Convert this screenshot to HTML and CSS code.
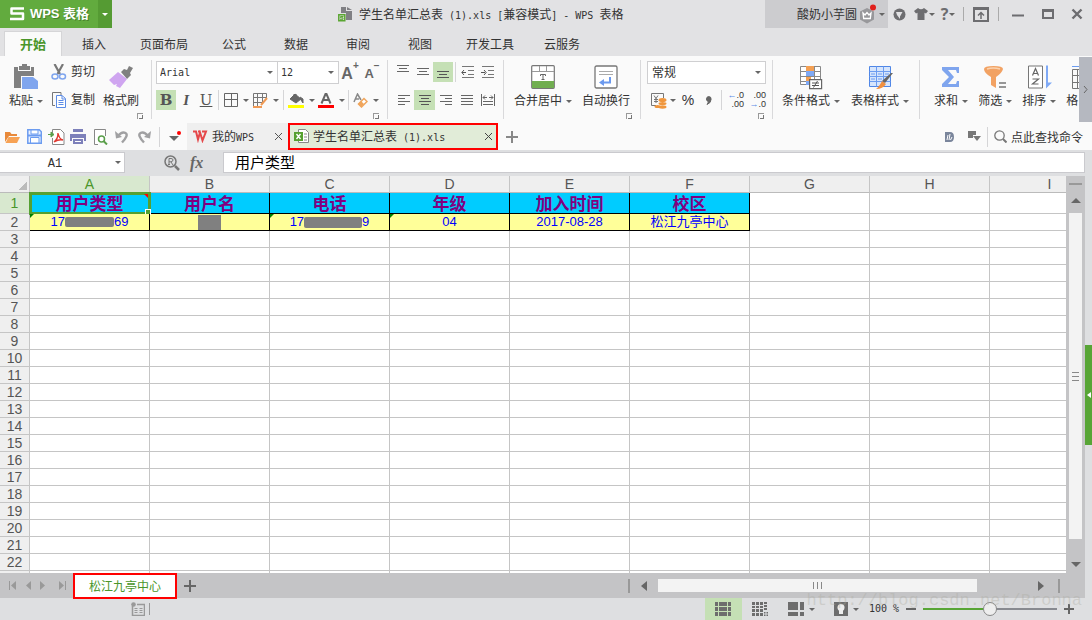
FILE: index.html
```
<!DOCTYPE html>
<html lang="zh-CN">
<head>
<meta charset="utf-8">
<title>学生名单汇总表 (1).xls - WPS 表格</title>
<link rel="stylesheet" href="styles.css">
</head>
<body>
<header class="titlebar">
  <button class="brand"><svg width="16" height="14" viewBox="0 0 16 14"><path d="M15 1.500H2.500V6.500H14V12H1" fill="none" stroke="#fff" stroke-width="2.500" stroke-linejoin="round"/></svg><span>WPS 表格</span></button>
  <button class="brand-menu" aria-label="菜单"><i class="arrow"></i></button>
  <div class="doc-title">
    <svg width="15" height="15" viewBox="0 0 15 15"><path d="M3 0h5v4h6v9H8V6H3z" fill="#808084"/><path d="M9 0l5 3H9z" fill="#808084"/><path d="M.8 7.800h6v6h-6z" fill="#e2e2e4" stroke="#5aa632" stroke-width="1.500"/><path d="M5.500 9.500H2.500v1.300h2.500v1.500H2" fill="none" stroke="#5aa632"/></svg>
    <span>学生名单汇总表<code> (1).xls [</code>兼容模式<code>] - WPS </code>表格</span>
  </div>
  <button class="account"><span>酸奶小芋圆</span><svg width="16" height="20" viewBox="0 0 16 20"><path d="M7 4l7 3.500v8L7 19.500l-7-4v-8z" fill="#98989b"/><path d="M3 9l2 2 2-2.500L9 11l2-2-.7 5.500H3.700z" fill="none" stroke="#fff" stroke-width="1.300"/><circle cx="13" cy="3.500" r="3" fill="#e0201c"/></svg><i class="arrow"></i></button>
  <div class="window-tools">
    <button class="skin" aria-label="皮肤"><svg width="13" height="13" viewBox="0 0 13 13"><circle cx="6.500" cy="6.500" r="6" fill="#6d6d70"/><path d="M3 4h6.500L7 8.500v2.500L4 7z" fill="#e2e2e4"/></svg></button>
    <button class="wide" aria-label="换装"><svg width="14" height="12" viewBox="0 0 14 12"><path d="M0 3l4-3q3 2.500 6 0l4 3-2 2.500-1.500-.8V12h-7V4.700L2 5.500z" fill="#6d6d70"/></svg><i class="arrow"></i></button>
    <button class="help" aria-label="帮助"><b>?</b><i class="arrow"></i></button>
    <i class="bar"></i>
    <button class="box" aria-label="隐藏功能区"><svg width="16" height="15" viewBox="0 0 16 15"><path d="M1 1h14v13H1zM1 2h14" fill="none" stroke="#6d6d70" stroke-width="2"/><path d="M8 12V6M5 8.500l3-3 3 3" fill="none" stroke="#6d6d70" stroke-width="1.500"/></svg></button>
    <i class="bar"></i>
    <button class="win" aria-label="最小化"><svg width="12" height="12" viewBox="0 0 12 12"><path d="M0 7.500h12" stroke="#6d6d70" stroke-width="2"/></svg></button>
    <button class="win" aria-label="最大化"><svg width="12" height="12" viewBox="0 0 12 12"><path d="M1 2h10v8H1z" fill="none" stroke="#6d6d70" stroke-width="2"/><path d="M0 2.500h12" stroke="#6d6d70" stroke-width="3"/></svg></button>
    <button class="win" aria-label="关闭"><svg width="12" height="12" viewBox="0 0 12 12"><path d="M1.500 1.500l9 9M10.500 1.500l-9 9" stroke="#6d6d70" stroke-width="2.400"/></svg></button>
  </div>
</header>

<nav class="tabs">
  <button class="active">开始</button><button>插入</button><button>页面布局</button><button>公式</button><button>数据</button><button>审阅</button><button>视图</button><button>开发工具</button><button>云服务</button>
</nav>

<section class="ribbon">
  <div class="groups">
    <div class="group clipboard">
      <button class="big"><svg width="26" height="26" viewBox="0 0 26 26"><path d="M1 3h4v4h13V3h3v9H8v12H1z" fill="#808080"/><path d="M6 2h3V0h5v2h3v4H6z" fill="#808080"/><path d="M9 13h11l5 4v8H9z" fill="#7fa5ee"/></svg><span>粘贴<i class="arrow"></i></span></button>
      <div class="stack">
        <button><svg width="16" height="16" viewBox="0 0 16 16"><path d="M3.500 0L9 10M12 0L6.500 10" stroke="#777" stroke-width="2.200"/><ellipse cx="4" cy="12.500" rx="3" ry="2.500" fill="none" stroke="#7fa5ee" stroke-width="1.500"/><ellipse cx="11.500" cy="12.500" rx="3" ry="2.500" fill="none" stroke="#7fa5ee" stroke-width="1.500"/></svg>剪切</button>
        <button><svg width="16" height="16" viewBox="0 0 16 16"><path d="M4 13.500H1.500V.5H10V3" fill="none" stroke="#777"/><path d="M5.500 3.500h5.500l3.500 3V15.500h-9z" fill="#fff" stroke="#5b8be6"/><path d="M7.500 8.500h5M7.500 10.500h5M7.500 12.500h5M11 4v3h3" fill="none" stroke="#5b8be6"/></svg>复制</button>
      </div>
      <button class="big"><svg width="24" height="24" viewBox="0 0 24 24"><path d="M12 7l3-3 3 1 2-4 4 2-3 5 1 2-4 4z" fill="#808080"/><path d="M9 7l9 7-7 9-4-2 1-2-3 1-5-5z" fill="#cfa5f0"/></svg><span>格式刷</span></button>
      <i class="launch"></i>
    </div>

    <div class="group font">
      <div class="line">
        <label class="combo face"><select aria-label="字体"><option>Arial</option></select><i class="arrow"></i></label>
        <label class="combo size"><select aria-label="字号"><option>12</option></select><i class="arrow"></i></label>
        <button class="grow" aria-label="增大字号"><b>A</b><sup>+</sup></button>
        <button class="grow small" aria-label="减小字号"><b>A</b><sup>−</sup></button>
      </div>
      <div class="line">
        <button class="tool on serif"><b>B</b></button><button class="tool serif"><em>I</em></button><button class="tool serif"><u>U</u></button><i class="sep"></i>
        <button class="split" aria-label="边框"><svg width="14" height="14" viewBox="0 0 14 14"><path d="M.5.5h13v13H.5zM7.500.5v13M.5 6.500h13" fill="none" stroke="#666"/></svg><i class="arrow"></i></button>
        <button class="split" aria-label="绘图边框"><svg width="15" height="15" viewBox="0 0 15 15"><path d="M8 13.500H.5V.5h13V5M.5 4.500h13M.5 9.500H9M4.500.5v13M9.500.5V9" fill="none" stroke="#777"/><path d="M14 5L8 12M0 14h9" stroke="#f09a55" stroke-width="2"/></svg><i class="arrow"></i></button><i class="sep"></i>
        <button class="split" aria-label="填充颜色"><svg width="16" height="15" viewBox="0 0 16 15"><path d="M2 6l5-5 6 5-5 4zM5 2h4M12 4l3 2v4l-2-3" fill="#666" stroke="#666"/><path d="M0 12h16v3H0z" fill="#ff0"/></svg><i class="arrow"></i></button>
        <button class="split" aria-label="字体颜色"><svg width="16" height="15" viewBox="0 0 16 15"><path d="M3.500 10.500L7.500 1h1l4 9.500M5 7h6" fill="none" stroke="#666" stroke-width="2"/><path d="M0 12h16v3H0z" fill="#f00"/></svg><i class="arrow"></i></button><i class="sep"></i>
        <button class="split" aria-label="清除格式"><svg width="15" height="15" viewBox="0 0 15 15"><path d="M1 9l3.500-8L8 7M2.500 6H6" fill="none" stroke="#888" stroke-width="1.500"/><path d="M5.500 11L11 5.500l3 3L8.500 14z" fill="#fff" stroke="#f0a55c" stroke-width="1.500"/><path d="M5 11l3-3 3 3-3 3z" fill="#f0a55c"/></svg><i class="arrow"></i></button>
      </div>
      <i class="launch"></i>
    </div>

    <div class="group align">
      <div class="line">
        <button class="tool" aria-label="顶端对齐"><svg width="14" height="14" viewBox="0 0 14 14"><path d="M1 .5h12M3 3.500h8M1 6.500h12" stroke="#666"/></svg></button><button class="tool" aria-label="垂直居中"><svg width="14" height="14" viewBox="0 0 14 14"><path d="M1 3.500h12M3 6.500h8M1 9.500h12" stroke="#666"/></svg></button><button class="tool on" aria-label="底端对齐"><svg width="14" height="14" viewBox="0 0 14 14"><path d="M1 6.500h12M3 9.500h8M1 12.500h12" stroke="#555"/></svg></button><i class="sep"></i><button class="tool" aria-label="减少缩进"><svg width="14" height="14" viewBox="0 0 14 14"><path d="M1 1.500h12M7 5.500h6M7 9.500h6M1 12.500h12" stroke="#777"/><path d="M5 7.500H1M3 5L.8 7.500 3 10" fill="none" stroke="#555"/></svg></button><button class="tool" aria-label="增加缩进"><svg width="14" height="14" viewBox="0 0 14 14"><path d="M1 1.500h12M7 5.500h6M7 9.500h6M1 12.500h12" stroke="#777"/><path d="M0 7.500h4M3 5l2.200 2.500L3 10" fill="none" stroke="#555"/></svg></button>
      </div>
      <div class="line">
        <button class="tool" aria-label="左对齐"><svg width="14" height="14" viewBox="0 0 14 14"><path d="M1 2.500h12M1 5.500h7M1 8.500h12M1 11.500h7" stroke="#666"/></svg></button><button class="tool on" aria-label="居中"><svg width="14" height="14" viewBox="0 0 14 14"><path d="M1 2.500h12M3 5.500h8M1 8.500h12M3 11.500h8" stroke="#555"/></svg></button><button class="tool" aria-label="右对齐"><svg width="14" height="14" viewBox="0 0 14 14"><path d="M1 2.500h12M6 5.500h7M1 8.500h12M6 11.500h7" stroke="#666"/></svg></button><button class="tool" aria-label="两端对齐"><svg width="14" height="14" viewBox="0 0 14 14"><path d="M1 2.500h12M1 5.500h12M1 8.500h12M1 11.500h12" stroke="#666"/></svg></button><button class="tool" aria-label="分散对齐"><svg width="16" height="14" viewBox="0 0 16 14"><path d="M1.500 1v12M14.500 1v12M3 8.500h10M3 11.500h10M3 4.500h4M9 4.500h4M5 2.500l-2 2 2 2M11 2.500l2 2-2 2" fill="none" stroke="#666"/></svg></button>
      </div>
      <i class="launch"></i>
    </div>

    <div class="group merge">
      <button class="big"><svg width="24" height="24" viewBox="0 0 24 24"><rect x=".7" y=".7" width="22.600" height="22.600" rx="1" fill="#fff" stroke="#777" stroke-width="1.200"/><path d="M1 6.500h22M8.500 1v5.500M15.500 1v5.500" stroke="#999"/><path d="M9.500 11V9.500h5V11M12 9.500v5M10.500 14.500h3" fill="none" stroke="#666"/><path d="M1 16h22v7H1z" fill="#71ae50"/></svg><span>合并居中<i class="arrow"></i></span></button>
      <button class="big"><svg width="24" height="24" viewBox="0 0 24 24"><rect x="1" y="1" width="22" height="22" rx="1.500" fill="#fff" stroke="#777" stroke-width="1.300"/><path d="M5 6.500h14M5 9.500h14" stroke="#aaa"/><path d="M9 17.500h7V12" fill="none" stroke="#6b99ee" stroke-width="2"/><path d="M10 14v7l-5-3.500z" fill="#6b99ee"/></svg><span>自动换行</span></button>
      <i class="launch"></i>
    </div>

    <div class="group number">
      <div class="line"><label class="combo format"><select aria-label="数字格式"><option>常规</option></select><i class="arrow"></i></label></div>
      <div class="line">
        <button class="split" aria-label="货币"><svg width="18" height="17" viewBox="0 0 18 17"><path d="M6 13.500H1.500V1.500h12V6M4 3.500l2 3 2-3M6 6v5M4 7.500h4M4 9.500h4" fill="none" stroke="#777"/><g fill="#f0963c"><ellipse cx="12.500" cy="8" rx="4" ry="2"/><ellipse cx="12.500" cy="11.500" rx="4" ry="1.500"/><ellipse cx="12.500" cy="15" rx="4" ry="1.700"/><ellipse cx="7.500" cy="14.500" rx="3" ry="1.500"/></g></svg><i class="arrow"></i></button><button class="tool percent">%</button><button class="tool comma" aria-label="千位分隔"><svg width="7" height="9" viewBox="0 0 7 9"><path d="M3.500.5a2.600 2.600 0 0 1 2.600 2.800Q6 7 2 8.500 3.500 7 3.200 5.500A2.600 2.600 0 0 1 3.500.5" fill="#666" stroke="#666"/></svg></button><i class="sep"></i>
        <button class="decimal"><span><i>←</i>.0</span><span>.00</span></button><button class="decimal"><span>.00</span><span><i>→</i>.0</span></button>
      </div>
      <i class="launch"></i>
    </div>

    <div class="group styles">
      <button class="big"><svg width="24" height="24" viewBox="0 0 24 24"><path d="M1.500 1.500h20v18h-20zM1.500 6.500h20M1.500 11.500h20M1.500 16.500h20M7.500 1.500v18M15.500 1.500v18" fill="#fff" stroke="#888"/><path d="M7 1h8v5H7zM7 12h5v4H7z" fill="#f4a053"/><path d="M7 6h8v5H7zM7 16h3v4H7z" fill="#7fa9f5"/><path d="M10.600 14.600h12v9h-12z" fill="#fff" stroke="#666" stroke-width="1.200"/><path d="M13 18h7M13 20.500h7M18.500 16l-4 6.500" stroke="#555"/></svg><span>条件格式<i class="arrow"></i></span></button>
      <button class="big"><svg width="25" height="24" viewBox="0 0 25 24"><path d="M1.500 1.500h21v20h-21z" fill="#d6e5fc" stroke="#4f86e6"/><path d="M1.500 6.500h21M1.500 11.500h21M1.500 16.500h21M8.500 1.500v20M15.500 1.500v20M3 9h4M10 9h4M3 14h4M10 14h4M17 9h4" stroke="#6c9cf0"/><path d="M25 8l-8 10-3-2 9-8z" fill="#666"/><path d="M14 16l4 3q-3 5-10 5 3-2 6-8" fill="#f09040"/></svg><span>表格样式<i class="arrow"></i></span></button>
    </div>

    <div class="group edit">
      <button class="big"><svg width="20" height="24" viewBox="0 0 20 24"><path d="M1 2h17v6h-2l-1-3H7l6 7-6 7h8l1-3h2v6H1v-3l7-7-7-7z" fill="#7fa5ee"/></svg><span>求和<i class="arrow"></i></span></button>
      <button class="big"><svg width="24" height="24" viewBox="0 0 24 24"><path d="M1 4q0-3 9.500-3T20 4q-1 4-7 8v11l-5-3v-8Q1 8 1 4" fill="#f2a263"/><path d="M4 4q6-2 13 0" fill="none" stroke="#fbd3b0" stroke-width="1.500"/><path d="M16 18h7M16 22h7" stroke="#777" stroke-width="1.500"/></svg><span>筛选<i class="arrow"></i></span></button>
      <button class="big"><svg width="25" height="25" viewBox="0 0 25 25"><path d="M1.500 1.500h14v22h-14z" fill="#fff" stroke="#777"/><path d="M5.500 11L8.500 4l3 7M6.500 9h4M5.500 14.500h6l-6 5h6" fill="none" stroke="#666" stroke-width="1.200"/><path d="M19 1h2v17h4l-6 6z" fill="#7fa9f5"/></svg><span>排序<i class="arrow"></i></span></button>
      <button class="big partial" aria-label="格式"><svg width="8" height="24" viewBox="0 0 8 24"><path d="M1 1.500h7" stroke="#6c9cf0"/><path d="M8 4.500H1.500v19H8M1.500 10.500H8M1.500 17.500H8M6.500 4.500v19" fill="none" stroke="#777"/></svg><span>格</span></button>
    </div>
  </div>
  <button class="more" aria-label="更多"><svg width="5" height="9" viewBox="0 0 5 9"><path d="M1 1l3 3.500L1 8" fill="none" stroke="#666"/></svg></button>
</section>

<div class="docbar">
  <div class="quick">
    <button aria-label="打开"><svg width="16" height="16" viewBox="0 0 16 16"><path d="M1 13V3h5l1.500 2H13v2H5z" fill="#e8893a"/><path d="M4.500 8H16l-3 6H1.500z" fill="#f7a254"/></svg></button>
    <button aria-label="保存"><svg width="15" height="15" viewBox="0 0 15 15"><path d="M.8.8h11.500l2 2v11.500H.8z" fill="#eaf2ff" stroke="#6c9cf0" stroke-width="1.500"/><path d="M4 1h7v4H4zM3.500 8.500h8.500v5.500H3.500z" fill="#fff" stroke="#6c9cf0"/><path d="M1 6.500h13" stroke="#6c9cf0" stroke-width="2"/></svg></button>
    <button aria-label="输出为PDF"><svg width="17" height="16" viewBox="0 0 17 16"><path d="M4.500 4V.5h8l3.500 3.500v11.500H4.500V9" fill="#fff" stroke="#888"/><path d="M6 13q4-3 4-9 1 6 5 7-4-1-9 2" fill="none" stroke="#e03a32" stroke-width="1.400"/><path d="M0 5.500h4M3 3l3 2.500L3 8z" fill="#5a9e4a" stroke="#5a9e4a"/></svg></button>
    <button aria-label="打印"><svg width="16" height="15" viewBox="0 0 16 15"><path d="M3 0h10v3H3zM0 5h16v7h-2V9H2v3H0zM3 10h10v5H3z" fill="#7d80ba"/><path d="M5 12.500h6" stroke="#fff"/></svg></button>
    <button aria-label="打印预览"><svg width="15" height="16" viewBox="0 0 15 16"><path d="M5 15.500H1.500V.5H12.500V7" fill="#fff" stroke="#888"/><circle cx="8.500" cy="10" r="3" fill="#fff" stroke="#5a9e4a" stroke-width="1.500"/><path d="M10.500 12l3.500 3.500" stroke="#5a9e4a" stroke-width="2"/></svg></button>
    <button aria-label="撤销"><svg width="14" height="14" viewBox="0 0 14 14"><path d="M3 6Q7 1 10.500 3T7 12.500" fill="none" stroke="#a0a0a2" stroke-width="2.400"/><path d="M0 1l1 7.500L7 7z" fill="#a0a0a2"/></svg></button>
    <button aria-label="恢复"><svg width="14" height="14" viewBox="0 0 14 14"><path d="M11 6Q7 1 3.500 3T7 12.500" fill="none" stroke="#a0a0a2" stroke-width="2.400"/><path d="M14 1l-1 7.500L7 7z" fill="#a0a0a2"/></svg></button>
    <i class="sep"></i>
    <button class="custom" aria-label="自定义"><svg width="12" height="12" viewBox="0 0 12 12"><path d="M0 5h10L5 10z" fill="#666"/><circle cx="10" cy="2" r="2" fill="#f00"/></svg></button>
  </div>
  <div class="doc"><svg width="16" height="13" viewBox="0 0 16 13"><path d="M1 1.500h3l2 8 2-7 2.500 8L14 1.500h-4M8 1.500H6" fill="none" stroke="#e5484a" stroke-width="2"/></svg><span>我的<code>WPS</code></span><button aria-label="关闭"><svg width="9" height="9" viewBox="0 0 9 9"><path d="M1 1l7 7M8 1L1 8" stroke="#555"/></svg></button></div>
  <div class="doc current"><svg width="15" height="15" viewBox="0 0 15 15"><path d="M4.500 3V.5h7l3 3v10H4.500V12" fill="#fff" stroke="#888"/><path d="M10 5h3M10 8h3M10 11h3" stroke="#888"/><path d="M0 3h9v9H0z" fill="#55a02f"/><path d="M2.500 5l4 5M6.500 5l-4 5" stroke="#fff" stroke-width="1.400"/></svg><span>学生名单汇总表<code> (1).xls</code></span><button aria-label="关闭"><svg width="9" height="9" viewBox="0 0 9 9"><path d="M1 1l7 7M8 1L1 8" stroke="#444"/></svg></button></div>
  <button class="plus" aria-label="新建"><svg width="12" height="12" viewBox="0 0 12 12"><path d="M6 0v12M0 6h12" stroke="#888" stroke-width="2"/></svg></button>
  <div class="search">
    <svg width="9" height="10" viewBox="0 0 9 10"><path d="M0 0h5q4 0 4 5t-4 5H0z" fill="#7a859b"/><path d="M2 8l1-5M4 8l1-6M5.500 8L7 5" stroke="#fff"/></svg>
    <svg width="13" height="11" viewBox="0 0 13 11"><path d="M0 0h8v4H5v3H0z" fill="#777"/><path d="M5 5h8L9 10z" fill="#777"/></svg>
    <i class="sep"></i>
    <svg width="13" height="13" viewBox="0 0 13 13"><circle cx="5.500" cy="5.500" r="4.700" fill="none" stroke="#777" stroke-width="1.300"/><path d="M9 9l3.500 3.500" stroke="#777" stroke-width="2"/></svg>
    <a href="#">点此查找命令</a>
  </div>
</div>

<div class="workspace">
  <div class="book">
    <div class="formula">
      <label class="name"><input value="A1" aria-label="名称框"><i class="arrow"></i></label>
      <div class="fx"><svg width="16" height="16" viewBox="0 0 16 16"><circle cx="6.500" cy="6.500" r="5.500" fill="none" stroke="#777" stroke-width="1.500"/><path d="M11 11l4 4" stroke="#777" stroke-width="2.500"/><path d="M5 10V3.500h2q2 0 2 1.500T7 6.800H5M7 7l2 3M4 9.500h2" fill="none" stroke="#777"/></svg><em>fx</em></div>
      <input class="value" value="用户类型" aria-label="编辑栏">
    </div>
    <div class="sheet">
      <div class="grid">
        <table>
          <colgroup><col class="num"><col span="9"></colgroup>
          <thead><tr><th class="corner"></th><th class="sel">A</th><th>B</th><th>C</th><th>D</th><th>E</th><th>F</th><th>G</th><th>H</th><th>I</th></tr></thead>
          <tbody>
            <tr class="head"><th class="sel">1</th><td class="cursor">用户类型<i class="handle"></i></td><td>用户名</td><td>电话</td><td>年级</td><td>加入时间</td><td>校区</td><td></td><td></td><td></td></tr>
            <tr class="data"><th>2</th><td class="flag"><div>17<i class="mask"></i>69</div></td><td><div><i class="mask block"></i></div></td><td class="flag"><div>17<i class="mask long"></i>9</div></td><td class="flag">04</td><td>2017-08-28</td><td>松江九亭中心</td><td></td><td></td><td></td></tr>
            <tr><th>3</th><td><td><td><td><td><td><td><td><td></tr>
            <tr><th>4</th><td><td><td><td><td><td><td><td><td></tr>
            <tr><th>5</th><td><td><td><td><td><td><td><td><td></tr>
            <tr><th>6</th><td><td><td><td><td><td><td><td><td></tr>
            <tr><th>7</th><td><td><td><td><td><td><td><td><td></tr>
            <tr><th>8</th><td><td><td><td><td><td><td><td><td></tr>
            <tr><th>9</th><td><td><td><td><td><td><td><td><td></tr>
            <tr><th>10</th><td><td><td><td><td><td><td><td><td></tr>
            <tr><th>11</th><td><td><td><td><td><td><td><td><td></tr>
            <tr><th>12</th><td><td><td><td><td><td><td><td><td></tr>
            <tr><th>13</th><td><td><td><td><td><td><td><td><td></tr>
            <tr><th>14</th><td><td><td><td><td><td><td><td><td></tr>
            <tr><th>15</th><td><td><td><td><td><td><td><td><td></tr>
            <tr><th>16</th><td><td><td><td><td><td><td><td><td></tr>
            <tr><th>17</th><td><td><td><td><td><td><td><td><td></tr>
            <tr><th>18</th><td><td><td><td><td><td><td><td><td></tr>
            <tr><th>19</th><td><td><td><td><td><td><td><td><td></tr>
            <tr><th>20</th><td><td><td><td><td><td><td><td><td></tr>
            <tr><th>21</th><td><td><td><td><td><td><td><td><td></tr>
            <tr><th>22</th><td><td><td><td><td><td><td><td><td></tr>
            <tr><th></th><td><td><td><td><td><td><td><td><td></tr>
          </tbody>
        </table>
      </div>
      <div class="vscroll"><i class="split-handle"></i><i class="tri up"></i><div class="thumb"><i></i><i></i><i></i></div><i class="tri down"></i></div>
    </div>
    <div class="sheetbar">
      <div class="nav">
        <button aria-label="第一个"><svg width="8" height="9" viewBox="0 0 8 9"><path d="M.5 0v9" stroke="#999"/><path d="M7 0v9L2 4.500z" fill="#999"/></svg></button>
        <button aria-label="上一个"><svg width="5" height="9" viewBox="0 0 5 9"><path d="M5 0v9L0 4.500z" fill="#999"/></svg></button>
        <button aria-label="下一个"><svg width="5" height="9" viewBox="0 0 5 9"><path d="M0 0v9l5-4.500z" fill="#999"/></svg></button>
        <button aria-label="最后一个"><svg width="8" height="9" viewBox="0 0 8 9"><path d="M7.500 0v9" stroke="#999"/><path d="M1 0v9l5-4.500z" fill="#999"/></svg></button>
      </div>
      <button class="sheet-tab">松江九亭中心</button>
      <button class="plus" aria-label="新建工作表"><svg width="12" height="12" viewBox="0 0 12 12"><path d="M6 0v12M0 6h12" stroke="#666" stroke-width="2"/></svg></button>
      <div class="hscroll"><i class="grip"></i><i class="tri left"></i><div class="track"><div class="thumb"><i></i><i></i><i></i></div></div><i class="tri right"></i><i class="grip"></i></div>
    </div>
  </div>
  <aside class="side"><button aria-label="展开任务窗格"><i class="tri left"></i></button></aside>
</div>

<footer class="status">
  <div class="record"><svg width="14" height="14" viewBox="0 0 14 14"><path d="M1.500 4v9.500h12V2.500H6" fill="none" stroke="#999" stroke-width="1.500"/><path d="M3.500 6.500h3M8.500 6.500h3M3.500 8.500h3M8.500 8.500h3M3.500 10.500h3M8.500 10.500h3" stroke="#999"/><circle cx="2.500" cy="2.500" r="2.300" fill="#999"/></svg><i class="bar"></i></div>
  <div class="views">
    <button class="on" aria-label="普通视图"><svg width="16" height="14" viewBox="0 0 16 14"><path d="M0 0h16v14H0z" fill="#6d6d6d"/><path d="M0 4.500h16M0 9.500h16M3.500 0v14M12.500 0v14" stroke="#c5e0b5"/></svg></button>
    <button aria-label="分页预览"><svg width="16" height="14" viewBox="0 0 16 14"><path d="M0 0h11v10H0zM12 0h3v2h-3zM12 3h3v2h-3zM12 6h3v2h-3zM0 11h3v3H0zM4 11h3v3H4zM8 11h3v3H8zM12 10h4v4h-4z" fill="#6d6d6d"/><path d="M0 3.500h11M0 6.500h11M3.500 0v10M7.500 0v10M14 10v4M12 12h4" stroke="#dedfe1"/></svg></button>
    <button aria-label="冻结窗格"><svg width="16" height="14" viewBox="0 0 16 14"><path d="M0 0h16v14H0z" fill="#6d6d6d"/><path d="M0 9h16M11 0v14" stroke="#dedfe1" stroke-width="2"/></svg><i class="arrow"></i></button>
    <button aria-label="护眼模式"><svg width="14" height="14" viewBox="0 0 14 14"><path d="M0 0h14v14H0z" fill="#6d6d6d"/><circle cx="7" cy="5.500" r="3.500" fill="#eee"/><path d="M5 8h4v4H5z" fill="#eee"/></svg><i class="arrow"></i></button>
  </div>
  <div class="zoom"><code>100 %</code><button aria-label="缩小"><svg width="10" height="10" viewBox="0 0 10 10"><path d="M0 5h10" stroke="#666" stroke-width="2"/></svg></button><input type="range" min="0" max="100" value="50" aria-label="缩放"><button aria-label="放大"><svg width="10" height="10" viewBox="0 0 10 10"><path d="M0 5h10M5 0v10" stroke="#666" stroke-width="2"/></svg></button></div>
  <span class="watermark">http://blog.csdn.net/Bronna</span>
</footer>
</body>
</html>
```
FILE: styles.css
```
* { box-sizing: border-box; }
body { margin: 0; height: 100vh; display: flex; flex-direction: column; overflow: hidden; background: #dedfe1; color: #333; font: 12px/16px "Liberation Sans", "Noto Sans CJK SC", sans-serif; }
button, select, input { margin: 0; padding: 0; border: 0; background: none; color: inherit; font: inherit; }
button { display: flex; align-items: center; justify-content: center; white-space: nowrap; }
select { appearance: none; width: 100%; height: 100%; }
svg, i { flex: none; display: block; }
a { color: inherit; text-decoration: none; }
code { font: 10px/16px "DejaVu Sans Mono", monospace; white-space: pre; }
.arrow { width: 0; height: 0; border: 3px solid transparent; border-top-color: #666; border-bottom: 0; }
.sep { width: 1px; height: 20px; margin: 0 2px; background: #d5d5d7; }
.tri { width: 0; height: 0; border: 5px solid transparent; }
.tri.up { border-bottom-color: #666; border-top: 0; }
.tri.down { border-top-color: #666; border-bottom: 0; }
.tri.left { border-right: 6px solid #666; border-left: 0; }
.tri.right { border-left: 6px solid #666; border-right: 0; }

.titlebar { display: flex; height: 28px; flex: none; background: #e2e2e4; }
.brand { width: 98px; gap: 5px; background: #62ab3e; color: #fff; font-size: 13px; font-weight: bold; text-shadow: 1px 1px #46822a; }
.brand-menu { width: 14px; background: #559b33; }
.brand-menu .arrow { border-top-color: #fff; }
.doc-title { flex: 1; display: flex; align-items: center; gap: 6px; padding-left: 226px; white-space: nowrap; }
.doc-title span, .account span, .doc span, .search a { padding-top: 2px; }
.account { width: 123px; padding-right: 3px; justify-content: flex-end; gap: 3px; background: #cccccf; }
.window-tools { display: flex; align-items: center; width: 204px; padding-left: 5px; }
.window-tools button { height: 28px; }
.window-tools .skin { width: 18px; justify-content: flex-start; }
.window-tools .wide { width: 26px; gap: 1px; }
.window-tools .help { width: 22px; gap: 1px; }
.window-tools b { font: bold 16px/16px "Open Sans", sans-serif; color: #6d6d70; }
.window-tools .bar { width: 1px; height: 14px; margin: 0 4px; background: #aaa; }
.window-tools .box { width: 26px; }
.window-tools .win { flex: 1; }

.tabs { display: flex; height: 28px; flex: none; padding: 3px 4px 0; background: #e2e2e4; }
.tabs button { min-width: 62px; padding: 2px 15px 0; }
.tabs .active { min-width: 58px; margin-right: 1px; border: 1px solid #d5d5d7; border-bottom: 0; background: #fafafa; color: #4a962a; font-weight: bold; font-size: 13px; }

.ribbon { display: flex; height: 67px; flex: none; background: #fafafa; }
.groups { flex: 1; min-width: 0; display: flex; overflow: hidden; padding-top: 2px; }
.group { position: relative; flex: none; display: flex; }
.group::after { content: ""; position: absolute; right: 0; top: 2px; width: 1px; height: 59px; background: #d9d9db; }
.group.edit::after { display: none; }
.big { height: 58px; flex-direction: column; justify-content: flex-start; padding-top: 6px; }
.big svg { height: 26px; }
.big span { display: flex; align-items: center; gap: 4px; padding-top: 3px; }
.launch { position: absolute; right: 9px; bottom: 4px; width: 6px; height: 6px; border: 1px solid #999; border-width: 1px 0 0 1px; }
.launch::after { content: ""; position: absolute; right: 0; bottom: 0; width: 3px; height: 3px; border: 1px solid #777; border-width: 0 1px 1px 0; }
.align .launch { display: none; }
.clipboard { padding: 0 13px 0 9px; gap: 8px; }
.stack button { height: 28px; gap: 4px; }
.line { display: flex; align-items: center; height: 28px; }
.font, .align, .number { flex-direction: column; }
.font { padding: 0 5px 0 4px; }
.combo { position: relative; height: 23px; border: 1px solid #cfcfd1; background: #fff; }
.combo select { padding: 1px 0 0 4px; }
.combo .arrow { position: absolute; right: 4px; top: 9px; }
.face select, .size select { font: 10px/16px "DejaVu Sans Mono", monospace; padding-left: 3px; }
.face { width: 122px; }
.size { width: 61px; border-left: 0; }
.format { width: 119px; }
.grow { width: 22px; align-items: flex-start; color: #666; }
.grow b { padding-top: 3px; font: bold 16px/20px "Liberation Sans", sans-serif; }
.grow.small b { font-size: 13px; }
.grow sup { font: bold 10px/10px "Liberation Sans", sans-serif; }
.tool { width: 20px; height: 20px; }
.on { background: #c5e0b5; }
.serif { font: 15px/20px "DejaVu Serif", serif; color: #555; }
.serif em { font-weight: bold; font-family: "Liberation Serif", serif; }
.split { width: 30px; height: 20px; gap: 5px; }
.align { padding: 0 6px 0 5px; }
.align .line:last-of-type .tool { width: 21px; }
.merge { padding: 0 11px 0 10px; gap: 10px; }
.number { padding: 0 5px 0 6px; }
.number .split { gap: 2px; margin-left: 1px; }
.percent { font: 14px/20px "Liberation Sans", sans-serif; }
.number .sep { margin-left: 3px; }
.decimal { width: 22px; flex-direction: column; align-items: flex-end; padding-right: 2px; font: 9px/9px "Liberation Sans", sans-serif; }
.decimal i { display: inline; color: #5b8be6; font-style: normal; }
.styles { padding: 0 11px 0 9px; gap: 11px; }
.edit { padding-left: 14px; gap: 10px; }
.partial { align-items: flex-start; }
.partial svg { margin-left: 5px; }
.more { width: 13px; margin: 1px 0; background: #b5b8c0; }

.docbar { display: flex; height: 27px; flex: none; background: #fafafa; }
.quick { display: flex; align-items: center; width: 187px; padding-left: 1px; }
.quick button { width: 22px; height: 26px; }
.quick .sep { margin: 0 4px; }
.docbar .doc { display: flex; align-items: center; gap: 4px; width: 101px; padding-left: 5px; background: #efefef; }
.docbar .doc button { margin-left: auto; width: 20px; height: 20px; }
.docbar .current { width: 210px; padding-left: 4px; border: 2px solid #f00; background: #e1ecd8; }
.current button { margin-right: -2px; }
.docbar .plus { width: 28px; }
.search { display: flex; align-items: center; gap: 4px; margin-left: auto; padding-right: 9px; }
.search svg:first-child { margin-right: 10px; }

.workspace { flex: 1; min-height: 0; display: flex; }
.book { flex: 1; min-width: 0; display: flex; flex-direction: column; }
.formula { display: flex; flex: none; height: 26px; padding: 2px 0 3px; }
.name { position: relative; width: 125px; border: 1px solid #cacace; border-left: 0; background: #fff; }
.name input { width: 110px; height: 100%; padding-top: 2px; text-align: center; font: 12px/16px "Liberation Mono", monospace; }
.name .arrow { position: absolute; right: 3px; top: 8px; }
.fx { display: flex; align-items: center; gap: 10px; width: 98px; padding-left: 39px; }
.fx em { font: italic bold 16px/16px "Liberation Serif", serif; color: #666; }
.value { flex: 1; min-width: 0; padding: 1px 0 0 11px; border: 1px solid #cacace; background: #fff; font-size: 15px; color: #000; }
.sheet { flex: 1; min-height: 0; display: flex; }
.grid { flex: 1; min-width: 0; overflow: hidden; background: #fff; }
table { width: 1110px; table-layout: fixed; border-collapse: separate; border-spacing: 0; }
col { width: 120px; }
col.num { width: 30px; }
th, td { height: 17px; padding: 0; border: 0 solid #c5c5c5; border-width: 0 1px 1px 0; text-align: center; font: 13px/16px "Liberation Sans", "Noto Sans CJK SC", sans-serif; }
th { background: #efefef; color: #555; }
thead th { border-bottom-color: #bbb; font-size: 14px; }
tbody th { font-size: 14px; line-height: 15px; }
.sel { background: #d8e8cf; color: #4a962a; }
.corner { background: linear-gradient(135deg, transparent 50%, #bbb 50%) no-repeat 18px 5px / 9px 9px #efefef; }
.head td { height: 21px; padding-top: 4px; line-height: 16px; }
.head td:nth-child(-n+7) { border-color: #000; background: #0cf; color: #800080; font-size: 17px; font-weight: bold; }
.data td:nth-child(-n+7) { border-color: #000; background: #ff9; color: #00f; }
.data div { display: flex; justify-content: center; align-items: center; height: 16px; }
td.cursor { position: relative; outline: 3px solid #55a032; outline-offset: -2px; }
.handle { position: absolute; right: -2px; bottom: -2px; width: 6px; height: 6px; border: 1px solid #fff; background: #55a032; }
.cursor::after { content: ""; position: absolute; right: 1px; top: 1px; border: 2px solid #f00; border-left-color: transparent; border-bottom-color: transparent; }
td.flag { position: relative; }
td.flag::before { content: ""; position: absolute; left: 0; top: 0; border: 2px solid #008000; border-right-color: transparent; border-bottom-color: transparent; }
.mask { width: 49px; height: 10px; background: #808080; border-radius: 2px; }
.mask.long { width: 58px; height: 11px; }
.mask.block { width: 23px; height: 15px; border-radius: 0; }
.vscroll { width: 19px; display: flex; flex-direction: column; align-items: center; background: #c4c4c6; padding: 7px 0 6px; }
.split-handle { width: 13px; height: 2px; background: #999; }
.vscroll .up { margin: 13px 0 10px; }
.vscroll .thumb { flex: 1; width: 13px; margin-bottom: 23px; display: flex; flex-direction: column; align-items: center; justify-content: center; gap: 3px; background: #f3f3f3; }
.vscroll .thumb i { width: 7px; height: 1px; background: #888; }
.sheetbar { display: flex; height: 25px; flex: none; background: #c4c4c6; }
.nav { display: flex; align-items: center; gap: 9px; width: 73px; padding-left: 9px; }
.nav button:last-child { margin-left: 4px; }
.sheet-tab { position: relative; width: 104px; height: 26px; padding-top: 2px; border: 2px solid #f00; background: #fff; color: #4a962a; }
.sheetbar .plus { width: 26px; }
.hscroll { display: flex; align-items: center; width: 432px; margin-left: auto; margin-right: 25px; }
.grip { width: 2px; height: 14px; background: #999; }
.hscroll .left { margin: 0 11px; }
.track { flex: 1; margin-right: 61px; }
.hscroll .right { margin-right: 14px; }
.track .thumb { display: flex; align-items: center; justify-content: center; gap: 3px; height: 13px; background: #f3f3f3; }
.track .thumb i { width: 1px; height: 7px; background: #888; }
.side { display: flex; align-items: center; width: 7px; padding-top: 42px; }
.side button { width: 7px; height: 100px; background: #58a536; }
.side .tri { border-width: 3px 4px 3px 0; border-right-color: #fff; }

.status { position: relative; display: flex; align-items: center; height: 22px; flex: none; }
.record { display: flex; align-items: center; gap: 4px; padding-left: 131px; }
.record .bar { width: 1px; height: 12px; background: #999; }
.views { display: flex; margin-left: auto; }
.views button { gap: 5px; width: 37px; height: 22px; }
.views button:nth-child(n+3) { width: 45px; }
.zoom { display: flex; align-items: center; gap: 7px; padding: 0 18px 0 0; }
input[type=range] { appearance: none; width: 134px; height: 16px; background: linear-gradient(90deg, #58a536 50%, #888a90 50%) no-repeat center / 100% 2px; }
input[type=range]::-webkit-slider-thumb { appearance: none; width: 14px; height: 14px; border: 1px solid #888; border-radius: 50%; background: #eee; }
.watermark { position: absolute; right: 10px; top: -8px; font: 17px/22px "Liberation Mono", monospace; color: rgba(170, 170, 160, 0.35); white-space: nowrap; pointer-events: none; }
```
